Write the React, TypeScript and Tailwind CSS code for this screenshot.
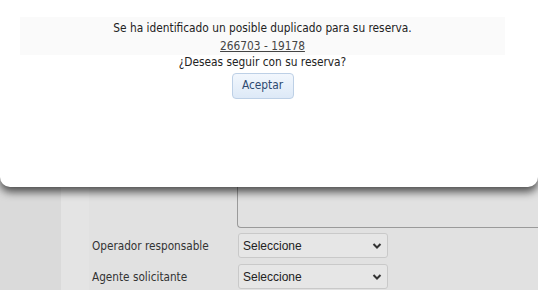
export default function App() {
  const font = { fontFamily: '"DejaVu Sans Condensed", "DejaVu Sans", Verdana, sans-serif' };
  const selFont = { fontFamily: '"Liberation Sans", Arial, sans-serif' };
  return (
    <div className="relative w-[538px] h-[290px] overflow-hidden bg-[#dadada]" style={font}>
      {/* background page */}
      <div className="absolute inset-0 flex">
        <div className="w-[61px] shrink-0 bg-[#dadada]" />
        <div className="w-[28px] shrink-0 bg-[#e4e4e4]" />
        <div className="flex-1 bg-[#e1e1e1] pl-[3px]">
          <div className="mt-[100px] ml-[145px] h-[128px] border border-[#9a9a9a] rounded-bl-[4px] border-r-0" />
          <div className="flex items-center mt-[5px] h-[25px]">
            <span className="w-[146px] text-[11.7px] text-[#333] pt-[2px]">Operador responsable</span>
            <div className="w-[150px] h-[25px] rounded-[3px] border border-[#c9c9c9] bg-[#e6e6e6] flex items-center justify-between pl-[4px] pr-[5px] text-[12px] text-[#222]" style={selFont}>
              <span>Seleccione</span>
              <svg width="10" height="8" viewBox="0 0 10 8"><path d="M1.5 2 L5 5.5 L8.5 2" stroke="#333" strokeWidth="2" fill="none" /></svg>
            </div>
          </div>
          <div className="flex items-center mt-[6px] h-[25px]">
            <span className="w-[146px] text-[11.7px] text-[#333] pt-[2px]">Agente solicitante</span>
            <div className="w-[150px] h-[25px] rounded-[3px] border border-[#c9c9c9] bg-[#e6e6e6] flex items-center justify-between pl-[4px] pr-[5px] text-[12px] text-[#222]" style={selFont}>
              <span>Seleccione</span>
              <svg width="10" height="8" viewBox="0 0 10 8"><path d="M1.5 2 L5 5.5 L8.5 2" stroke="#333" strokeWidth="2" fill="none" /></svg>
            </div>
          </div>
        </div>
      </div>
      {/* modal */}
      <div className="absolute left-0 top-[-12px] w-[538px] h-[199px] bg-white rounded-[10px] shadow-[0_5px_9px_rgba(0,0,0,0.65)]">
        <div className="mt-[29px] ml-[20px] w-[485px] bg-[#fafafa] h-[38px]" />
        <div className="absolute top-[29px] left-[20px] w-[485px] flex flex-col items-center text-[11.8px] text-[#222]">
          <div className="leading-[16px] mt-[3px]">Se ha identificado un posible duplicado para su reserva.</div>
          <div className="leading-[16px] mt-[2px] underline text-[#444]">266703 - 19178</div>
          <div className="leading-[16px]">¿Deseas seguir con su reserva?</div>
          <button className="mt-[3px] w-[62px] h-[26px] rounded-[4px] border border-[#bdd0e6] bg-gradient-to-b from-[#f2f7fd] to-[#dde9f7] text-[#2e4a70] text-[11.8px]">Aceptar</button>
        </div>
      </div>
    </div>
  );
}
